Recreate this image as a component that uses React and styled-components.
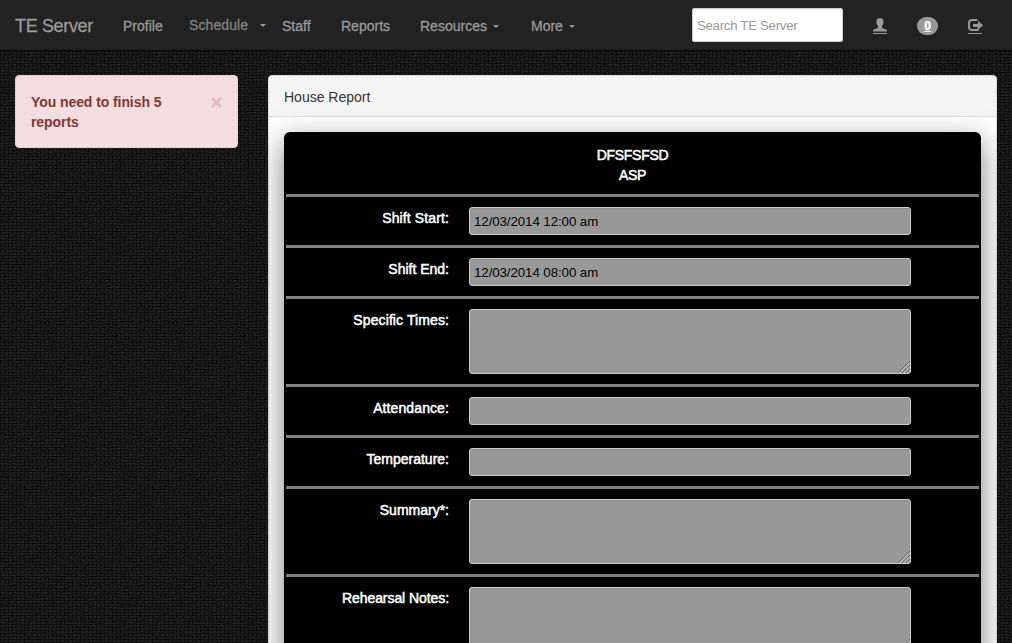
import React from "react";
import styled, { createGlobalStyle } from "styled-components";

const weave = `url("data:image/svg+xml,${encodeURIComponent(
  `<svg xmlns='http://www.w3.org/2000/svg' width='128' height='128'><filter id='n' x='0' y='0' width='100%' height='100%' color-interpolation-filters='sRGB'><feTurbulence type='fractalNoise' baseFrequency='.7 .9' numOctaves='2' stitchTiles='stitch'/><feColorMatrix values='.2 0 0 0 .01 .2 0 0 0 .01 .2 0 0 0 .01 0 0 0 0 1'/></filter><rect width='128' height='128' filter='url(#n)'/></svg>`
)}")`;

const GlobalStyle = createGlobalStyle`
  * { box-sizing: border-box; }
  html, body { margin: 0; height: 100%; overflow: hidden; }
  body {
    background-color: #181818;
    background-image:
      repeating-linear-gradient(0deg, rgba(0,0,0,.4) 0 1px, transparent 1px 3px),
      repeating-linear-gradient(90deg, rgba(0,0,0,.3) 0 1px, transparent 1px 4px),
      ${weave};
    font: 14px/20px "Liberation Sans", Arial, sans-serif;
    color: #333;
  }
`;

const Page = styled.div`
  height: 643px;
  overflow: hidden;
`;
const Navbar = styled.nav`
  height: 51px;
  display: flex;
  background: #222;
  border-bottom: 1px solid #080808;
  color: #999;
  -webkit-text-stroke: 0.3px currentColor;
`;
const Brand = styled.a`
  width: 108px;
  padding: 16px 0 0 15px;
  font-size: 18px;
  letter-spacing: -0.35px;
  white-space: nowrap;
`;
const NavItem = styled.a`
  width: ${(p) => p.$width}px;
  padding: ${(p) => (p.$raised ? 15 : 16)}px 15px 0;
  color: ${(p) => (p.$raised ? "#808080" : "#999")};
  letter-spacing: ${(p) => p.$tracking || 0}px;
  white-space: nowrap;
`;
const Caret = styled.i`
  display: inline-block;
  margin: 0 0 2px ${(p) => p.$gap || 6.5}px;
  vertical-align: middle;
  border-top: 3.5px solid #999;
  border-left: 3.5px solid transparent;
  border-right: 3.5px solid transparent;
`;
const Search = styled.input`
  width: 151px;
  height: 34px;
  margin: 8px 0 0 auto;
  padding: 1px 4px;
  border: 1px solid #ccc;
  border-radius: 2px;
  background: #fff;
  box-shadow: inset 0 1px 1px rgba(0, 0, 0, 0.075);
  font: 13.3px "Liberation Sans", Arial, sans-serif;
  letter-spacing: -0.32px;
  -webkit-text-stroke: 0;
  &::placeholder { color: #999; opacity: 1; }
`;
const Tools = styled.div`
  width: 169px;
  padding: 17px 28px 0 29px;
  display: flex;
  justify-content: space-between;
`;
const Tool = styled.svg`
  width: 17px;
  height: 18px;
  display: block;
`;
const Badge = styled.span`
  width: 21px;
  height: 18px;
  margin-right: 1px;
  border-radius: 10px;
  background: #999;
  color: #fff;
  font: bold 12px/19px "Liberation Sans", Arial, sans-serif;
  text-align: center;
  text-decoration: underline;
`;
const Content = styled.main`
  display: grid;
  grid-template-columns: 223px 729px;
  gap: 30px;
  align-items: start;
  padding: 24px 15px 0;
`;
const Alert = styled.aside`
  height: 73px;
  display: flex;
  justify-content: space-between;
  padding: 16px 15px 15px;
  border: 1px solid #ebccd1;
  border-radius: 4px;
  background: #f2dede;
  color: #843534;
  font-weight: bold;
  letter-spacing: -0.08px;
`;
const Message = styled.span`
  width: 150px;
`;
const Close = styled.svg`
  width: 11px;
  height: 11px;
  margin-top: 5px;
`;
const Panel = styled.section`
  height: 800px;
  border: 1px solid #ddd;
  border-radius: 4px;
  background: #fff;
`;
const PanelTitle = styled.header`
  height: 41px;
  padding: 11px 15px 0;
  border-bottom: 1px solid #ddd;
  border-radius: 3px 3px 0 0;
  background: #f5f5f5;
`;
const Report = styled.div`
  height: 720px;
  margin: 15px 15px 0;
  padding: 0 2px;
  border-radius: 6px;
  background: #000;
  color: #fff;
  box-shadow: 0 10px 30px rgba(0, 0, 0, 0.5);
`;
const ReportTitle = styled.div`
  height: 62px;
  padding-top: 13px;
  text-align: center;
  letter-spacing: -0.3px;
  -webkit-text-stroke: 0.5px #fff;
`;
const Row = styled.div`
  display: grid;
  grid-template-columns: 163px 442px;
  column-gap: 20px;
  padding: 10px 0;
  border-top: 3px solid #808080;
`;
const Label = styled.label`
  padding-top: 1px;
  text-align: right;
  white-space: nowrap;
  letter-spacing: ${(p) => p.$tracking || 0}px;
  -webkit-text-stroke: 0.5px #fff;
`;
const Field = styled.input`
  width: 442px;
  height: 28px;
  padding: 1px 4px;
  border: 1px solid #ccc;
  border-radius: 3px;
  background: #999;
  box-shadow: inset 0 1px 1px rgba(0, 0, 0, 0.075);
  color: #000;
  font: 13.3px "Liberation Sans", Arial, sans-serif;
  letter-spacing: -0.08px;
`;
const Area = styled.div`
  width: 442px;
  height: 65px;
  display: flex;
  justify-content: flex-end;
  align-items: flex-end;
  border: 1px solid #ccc;
  border-radius: 3px;
  background: #999;
  box-shadow: inset 0 1px 1px rgba(0, 0, 0, 0.075);
`;

const fields = [
  { label: "Shift Start:", value: "12/03/2014 12:00 am", tracking: 0.12 },
  { label: "Shift End:", value: "12/03/2014 08:00 am" },
  { label: "Specific Times:", area: true, tracking: 0.1 },
  { label: "Attendance:", tracking: 0.1 },
  { label: "Temperature:" },
  { label: "Summary*:", area: true },
  { label: "Rehearsal Notes:", area: true, tracking: -0.07 },
];

const UserIcon = () => (
  <Tool viewBox="0 0 17 18">
    <path fill="#999" d="M8 1C5.700 1 4.400 2.500 4.400 4.800c0 1.700.6 3.200 1.600 4.200v1.500c0 .8-4 1.500-4.600 2.600-.4.700-.4 1.400-.4 1.400h14s0-.7-.4-1.400c-.6-1.100-4.600-1.800-4.600-2.600V9c1-1 1.600-2.500 1.600-4.200C11.600 2.500 10.300 1 8 1Z" />
    <path fill="#999" d="M1 16h14v1H1z" />
  </Tool>
);
const LogoutIcon = () => (
  <Tool viewBox="0 0 17 18">
    <path fill="none" stroke="#999" strokeWidth="2" d="M10.500 3H5Q2 3 2 6v4q0 3 3 3h5.500v-1.500" />
    <path fill="#999" d="M6 7H11V3.800l5 4.500-5 4.500V10H6z" />
    <path fill="#999" d="M1 16h14v1H1z" />
  </Tool>
);
const Grip = () => (
  <svg width="12" height="12" viewBox="0 0 12 12">
    <path stroke="#666" d="M0 12L12 0M4 12l8-8M8 12l4-4" />
    <path stroke="#ccc" d="M1 12.500L12 1.500M5 12.500l7-7M9 12.500l3-3" />
  </svg>
);

export default function App() {
  return (
    <Page>
      <GlobalStyle />
      <Navbar>
        <Brand>TE Server</Brand>
        <NavItem $width={66}>Profile</NavItem>
        <NavItem $width={93} $raised $tracking={0.1}>Schedule<Caret $gap={11.5} /></NavItem>
        <NavItem $width={59}>Staff</NavItem>
        <NavItem $width={79}>Reports</NavItem>
        <NavItem $width={111}>Resources<Caret /></NavItem>
        <NavItem $width={77}>More<Caret /></NavItem>
        <Search placeholder="Search TE Server" />
        <Tools>
          <UserIcon />
          <Badge>0</Badge>
          <LogoutIcon />
        </Tools>
      </Navbar>
      <Content>
        <Alert>
          <Message>You need to finish 5 reports</Message>
          <Close viewBox="0 0 11 11">
            <path stroke="#e4bcbf" strokeWidth="2.800" d="M1 1l9 9M10 1l-9 9" />
          </Close>
        </Alert>
        <Panel>
          <PanelTitle>House Report</PanelTitle>
          <Report>
            <ReportTitle>DFSFSFSD<br />ASP</ReportTitle>
            {fields.map((f) => (
              <Row key={f.label}>
                <Label $tracking={f.tracking}>{f.label}</Label>
                {f.area ? <Area><Grip /></Area> : <Field defaultValue={f.value} />}
              </Row>
            ))}
          </Report>
        </Panel>
      </Content>
    </Page>
  );
}
